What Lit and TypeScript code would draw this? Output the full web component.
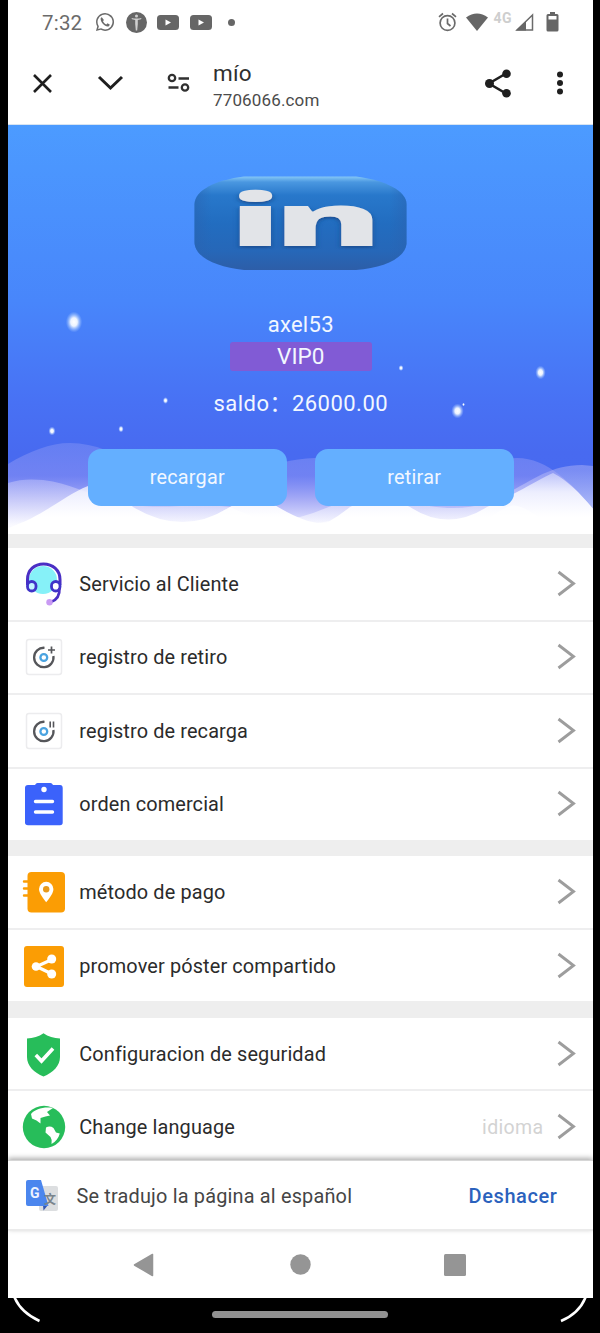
import { LitElement, html, css, svg } from "lit";
import { customElement, property } from "lit/decorators.js";

const icons: Record<string, unknown> = {
  headset: svg`<svg width="44" height="48" viewBox="0 0 44 48" fill="none">
    <circle cx="21" cy="20" r="14" fill="#86f1f8"/>
    <path d="M5.500 25V19.500C5.500 10 12.500 4 21.500 4S38 10 38 19.500V25" stroke="#4a2fc4" stroke-width="3"/>
    <rect x="5.500" y="21.500" width="8.500" height="9.500" rx="4.200" stroke="#4034c8" stroke-width="2.800" fill="#c5f4ff"/>
    <rect x="29.500" y="21.500" width="8.500" height="9.500" rx="4.200" stroke="#4034c8" stroke-width="2.800" fill="#fff"/>
    <path d="M37.500 28C38 36 34.500 40 29 42" stroke="#4a2fc4" stroke-width="2.600"/>
    <circle cx="27.500" cy="42.300" r="3.200" fill="#c99af3"/></svg>`,
  plus: svg`<svg width="44" height="48" viewBox="0 0 44 48" fill="none">
    <rect x="4.500" y="6.500" width="35" height="35" rx="2.500" stroke="#ececee" stroke-width="1.500"/>
    <path d="M22.500 14.800A9.700 9.700 0 1 0 31.400 23" stroke="#55565a" stroke-width="2.300"/>
    <circle cx="21.800" cy="24.500" r="3.400" stroke="#4aa3e0" stroke-width="2.300"/>
    <path d="M29.500 13.500V20.500M26 17H33" stroke="#55565a" stroke-width="1.700"/></svg>`,
  pause: svg`<svg width="44" height="48" viewBox="0 0 44 48" fill="none">
    <rect x="4.500" y="6.500" width="35" height="35" rx="2.500" stroke="#ececee" stroke-width="1.500"/>
    <path d="M22.500 14.800A9.700 9.700 0 1 0 31.400 23" stroke="#55565a" stroke-width="2.300"/>
    <circle cx="21.800" cy="24.500" r="3.400" stroke="#4aa3e0" stroke-width="2.300"/>
    <path d="M28.200 14.500V20.500M31.500 14.500V20.500" stroke="#55565a" stroke-width="1.600"/></svg>`,
  clipboard: svg`<svg width="44" height="48" viewBox="0 0 44 48">
    <path d="M6 5H13Q14 3 15.500 3H28.500Q30 3 31 5H38Q40.700 5 40.700 8V42.500Q40.700 45.300 38 45.300H6Q3 45.300 3 42.500V8Q3 5 6 5Z" fill="#3b62fb"/>
    <circle cx="22" cy="9.500" r="2.700" fill="#fff"/>
    <path d="M13.500 21.500H30.500M13.500 32H30.500" stroke="#fff" stroke-width="3.400" stroke-linecap="round"/></svg>`,
  book: svg`<svg width="44" height="48" viewBox="0 0 44 48">
    <rect x="5.500" y="4" width="37.500" height="40.500" rx="4" fill="#fb9d04"/>
    <path d="M2 13.500H7M2 20.500H7M2 27.500H7" stroke="#fb9d04" stroke-width="2.400" stroke-linecap="round"/>
    <path d="M24.200 34.200C20.500 29.500 17 25 17 21A7.200 7.200 0 0 1 31.400 21C31.400 25 28 29.500 24.200 34.200Z" fill="#fff"/>
    <circle cx="24.200" cy="21.200" r="3.200" fill="#e89a1c"/></svg>`,
  share: svg`<svg width="44" height="48" viewBox="0 0 44 48">
    <rect x="2" y="4" width="40" height="41" rx="3" fill="#fb9d04"/>
    <path d="M30 17.500L14.500 24.500L30 32" stroke="#fff" stroke-width="3.200" fill="none"/>
    <circle cx="14" cy="24.500" r="4.300" fill="#fff"/><circle cx="29.700" cy="17" r="4.500" fill="#fff"/><circle cx="29.700" cy="32" r="4.500" fill="#fff"/></svg>`,
  shield: svg`<svg width="44" height="48" viewBox="0 0 44 48">
    <path d="M21.500 3.200C26 6.500 32 8 38 8.500V27C38 36 31 42.500 21.500 46.500C12 42.500 5 36 5 27V8.500C11 8 17 6.500 21.500 3.200Z" fill="#27bd5a"/>
    <path d="M13.800 25L19.500 31L31 18.500" stroke="#fff" stroke-width="3.600" fill="none"/></svg>`,
  globe: svg`<svg width="44" height="48" viewBox="0 0 44 48">
    <circle cx="22" cy="24" r="21.200" fill="#27bd5a"/>
    <path d="M9 11C13 6 22 3.500 31 5L25 9L28 12.500L23.500 13.500L18.500 15L18.500 20.500L14.500 17.500L10 15.500Z" fill="#fff"/>
    <path d="M24 24.500Q28 22.500 31.500 25L34 29.500L37.800 30.500C36.500 35 34 38.500 29.500 41Q30.500 37 28.500 34L23.500 29.500Z" fill="#fff"/></svg>`,
};

@customElement("menu-row")
class MenuRow extends LitElement {
  @property() icon = "";
  @property() label = "";
  @property() hint = "";
  static styles = css`
    :host { display: flex; align-items: center; box-sizing: border-box; height: 73.500px; padding: 0 17px 0 14px; border-bottom: 2px solid #eeeeef; background: #fff; }
    :host([last]) { border-bottom: 0; height: 71.600px; }
    .icon { display: flex; width: 57.300px; }
    .label { flex: 1; padding-top: 1px; font-size: 19.900px; letter-spacing: 0.130px; color: #2b2b2b; white-space: nowrap; }
    .hint { padding-top: 1px; color: #d3d3d3; font-size: 19.500px; letter-spacing: 0.350px; margin-right: 12px; }
  `;
  render() {
    return html`<span class="icon">${icons[this.icon]}</span>
      <span class="label">${this.label}</span>
      <span class="hint">${this.hint}</span>
      <svg width="20" height="28" viewBox="0 0 20 28" fill="none"><path d="M2.500 2L17.500 13.500L2.500 25" stroke="#9d9d9d" stroke-width="2.900"/></svg>`;
  }
}

@customElement("status-bar")
class StatusBar extends LitElement {
  static styles = css`
    :host { display: flex; align-items: center; height: 44px; padding: 0 33.500px 0 34px; color: #6b6b6b; }
    .time { width: 53px; font-size: 20.500px; letter-spacing: 0.200px; white-space: nowrap; padding-top: 1px; }
    .left, .right { display: flex; align-items: center; }
    .left { gap: 10.500px; flex: 1; }
    .dot { width: 7px; height: 7px; border-radius: 50%; background: #666; margin-left: 6px; }
    .net { font: bold 14px Roboto, sans-serif; color: #cecece; margin: 0 3px 8px 6px; letter-spacing: 0.400px; }
    .wifi { margin-left: 9px; }
    .battery { margin-left: 12px; }
  `;
  render() {
    const tube = html`<svg width="22" height="17" viewBox="0 0 22 17"><rect y="1" width="22" height="15" rx="3.500" fill="#666"/><path d="M8.500 5.500L14 8.500L8.500 11.500Z" fill="#fff"/></svg>`;
    return html`<span class="time">7:32</span>
      <div class="left">
        <svg width="20" height="20" viewBox="1 1 22 22" fill="#6b6b6b"><path d="M19.050 4.910A9.820 9.820 0 0 0 12.040 2C6.580 2 2.130 6.450 2.130 11.910c0 1.750.46 3.450 1.320 4.950L2.050 22l5.250-1.380a9.900 9.900 0 0 0 4.740 1.210c5.460 0 9.910-4.450 9.910-9.910 0-2.650-1.030-5.140-2.900-7.010zM12.040 20.150a8.200 8.200 0 0 1-4.190-1.150l-.3-.18-3.120.82.830-3.040-.2-.31a8.200 8.200 0 1 1 6.980 3.860z"/><path d="M8.500 6.800c-.8.300-1.400 1.100-1.300 2.200.3 3.600 4.400 7.600 7.600 8 1.200.1 2.300-.7 2.400-2.200l-2.500-1.300-1.200 1.200c-1.500-.6-2.900-1.900-3.700-3.600l1-1.300z"/></svg>
        <svg width="21" height="21" viewBox="0 0 21 21"><circle cx="10.500" cy="10.500" r="10.500" fill="#666"/><path d="M5.500 6Q10.500 7.200 15.500 6L15 7.300L11.800 8V12L11.200 18.500H9.800L9.200 12V8L6 7.300Z" fill="#cfcfcf"/><circle cx="10.500" cy="4" r="1.500" fill="#cfcfcf"/></svg>
        ${tube}${tube}
        <span class="dot"></span>
      </div>
      <div class="right">
        <svg width="19" height="20" viewBox="0 0 19 20" fill="none" stroke="#6b6b6b" stroke-width="1.700"><circle cx="9.500" cy="11" r="7.400"/><path d="M9.500 6.500V11.500L12.500 14M1 4.800L5 1.500M18 4.800L14 1.500"/></svg>
        <svg class="wifi" width="22" height="18" viewBox="0 0 22 18"><path d="M0 4.500Q11-3.500 22 4.500L11 18Z" fill="#666"/></svg>
        <span class="net">4G</span>
        <svg width="19" height="18" viewBox="0 0 19 18"><path d="M2 17H17.500V2Z" fill="none" stroke="#6b6b6b" stroke-width="1.500"/><path d="M1 17.500H11V8Z" fill="#666"/></svg>
        <svg class="battery" width="13" height="20" viewBox="0 0 13 20"><path d="M4 0H9V2H11Q12.500 2 12.500 3.500V18Q12.500 19.500 11 19.500H2Q.5 19.500.5 18V3.500Q.5 2 2 2H4Z" fill="#666"/><rect x="2.500" y="4" width="8" height="3.500" fill="#fff"/></svg>
      </div>`;
  }
}

@customElement("browser-bar")
class BrowserBar extends LitElement {
  static styles = css`
    :host { display: flex; align-items: center; height: 81px; box-sizing: border-box; padding: 0 27px 2px 24px; border-bottom: 1px solid #d7e4f2; }
    .fold { margin-left: 44px; }
    .tune { margin-left: 43px; }
    .page { flex: 1; margin: 8px 0 0 23px; }
    .title { font-size: 22.500px; line-height: 27px; color: #303030; letter-spacing: 0.200px; }
    .host { font-size: 17px; line-height: 27px; color: #4b4b4b; letter-spacing: 0.150px; }
    .more { margin-left: 43px; }
  `;
  render() {
    return html`<svg width="21" height="21" viewBox="0 0 21 21"><path d="M2 2L19 19M19 2L2 19" stroke="#1f1f1f" stroke-width="2.600"/></svg>
      <svg class="fold" width="27" height="16" viewBox="0 0 27 16"><path d="M2 2L13.500 13L25 2" stroke="#1f1f1f" stroke-width="3" fill="none"/></svg>
      <svg class="tune" width="23" height="20" viewBox="0 0 23 20" fill="none" stroke="#303030" stroke-width="2.300"><circle cx="5" cy="5" r="3.200"/><path d="M11.500 5.500H22M1.500 14.500H11.500"/><circle cx="18" cy="14.500" r="3.200"/></svg>
      <div class="page"><div class="title">mío</div><div class="host">7706066.com</div></div>
      <svg width="28" height="29" viewBox="0 0 28 29" fill="#1f1f1f"><path d="M22 4.500L5 14.500L22 24.500" fill="none" stroke="#1f1f1f" stroke-width="2.600"/><circle cx="5.500" cy="14.500" r="4.500"/><circle cx="22.500" cy="4.700" r="4.300"/><circle cx="22.500" cy="24.300" r="4.300"/></svg>
      <svg class="more" width="11" height="26" viewBox="0 0 11 26" fill="#1f1f1f"><circle cx="5" cy="4.500" r="3"/><circle cx="5" cy="13" r="3"/><circle cx="5" cy="21.500" r="3"/></svg>`;
  }
}

@customElement("profile-hero")
class ProfileHero extends LitElement {
  static styles = css`
    :host { display: flex; flex-direction: column; align-items: center; position: relative; overflow: hidden; height: 409px; box-sizing: border-box; padding: 51px 0 0 1px; color: #f2f7ff; background: linear-gradient(#4c9bff 0, #4886fb 43%, #4871f4 68%, #486af0 80%, #4868ef); }
    .scene { position: absolute; top: 0; left: 0; }
    .logo, .name, .vip, .saldo, .actions { position: relative; }
    .logo { display: block; width: 213px; height: 95px; overflow: visible; }
    .name { margin-top: 40px; font-size: 22px; line-height: 28px; letter-spacing: 0.300px; }
    .vip { margin-top: 3px; width: 142px; height: 29px; border-radius: 3px; background: #815bd5; font-size: 22.500px; line-height: 29px; text-align: center; }
    .saldo { margin-top: 19px; font-size: 22px; line-height: 28px; letter-spacing: 0.480px; white-space: nowrap; }
    .actions { display: flex; gap: 28px; margin-top: 31px; }
    .btn { width: 199px; height: 57px; border-radius: 13px; background: #64afff; font-size: 19.800px; line-height: 57px; text-align: center; letter-spacing: 0.250px; }
  `;
  render() {
    const stars = [[66, 197, 5.5, 7], [532.5, 247.5, 3.5, 4.6], [449.5, 286, 4.2, 5], [393, 243, 1.7, 2], [157.5, 275.5, 1.8, 2.3], [44, 306, 2.4, 3], [113, 304, 1.8, 2.3], [455.5, 279.5, 1, 1.2]];
    return html`<svg class="scene" width="586" height="410" viewBox="0 0 586 410">
        <defs>
          <linearGradient id="back" gradientUnits="userSpaceOnUse" x1="0" y1="318" x2="0" y2="400"><stop offset="0" stop-color="#8f9cf6" stop-opacity=".4"/><stop offset=".4" stop-color="#8b92f5" stop-opacity=".6"/><stop offset=".7" stop-color="#b4b5f7" stop-opacity=".9"/><stop offset="1" stop-color="#ececff"/></linearGradient>
          <linearGradient id="mid" gradientUnits="userSpaceOnUse" x1="0" y1="345" x2="0" y2="400"><stop offset="0" stop-color="#b4b6f7" stop-opacity=".55"/><stop offset="1" stop-color="#fff" stop-opacity=".85"/></linearGradient>
          <linearGradient id="front" gradientUnits="userSpaceOnUse" x1="0" y1="342" x2="0" y2="392"><stop offset="0" stop-color="#d4d8fc" stop-opacity=".5"/><stop offset=".5" stop-color="#f2f3ff" stop-opacity=".9"/><stop offset="1" stop-color="#fff"/></linearGradient>
          <radialGradient id="star"><stop offset="0" stop-color="#fff"/><stop offset=".4" stop-color="#f4f9ff" stop-opacity=".95"/><stop offset="1" stop-color="#9fc6ff" stop-opacity="0"/></radialGradient>
        </defs>
        <path d="M0 339C22 326 42 318 62 318C112 318 150 362 190 362C226 362 258 334 307 333C355 333 370 370 410 370C458 370 465 333 509 333C540 333 565 360 586 385V410H0Z" fill="url(#back)"/>
        <path d="M0 358C12 354 23 354 35 355C62 358 82 370 105 376C150 388 180 376 222 382C245 392 262 397 292 392C312 387 330 376 350 374C372 370 385 372 402 376C425 384 455 386 479 378C515 364 535 340 574 340L586 341V410H0Z" fill="url(#mid)" opacity=".85"/>
        <path d="M0 403C38 390 55 371 80 361Q101 356 125 382Q175 412 222 382Q246 366 270 382Q304 402 320 397Q331 391 342 382Q372 365 402 382Q440 407 479 382C510 368 535 352 545 348C560 356 572 368 586 385V410H0Z" fill="url(#front)"/>
        <path d="M222 382Q255 398 285 399Q310 399 320 396L342 410H170ZM497 383C515 372 535 402 557 405Q573 405 586 397V410H450Z" fill="#fff" opacity=".6"/>
        ${stars.map(([x, y, rx, ry]) => svg`<ellipse cx=${x} cy=${y} rx=${rx * 1.5} ry=${ry * 1.5} fill="url(#star)"/>`)}
      </svg>
      <svg class="logo" viewBox="0 0 213 95">
        <defs>
          <linearGradient id="body" x1="0" y1="0" x2="0" y2="1"><stop offset="0" stop-color="#85c7f6"/><stop offset=".06" stop-color="#4a97e0"/><stop offset=".2" stop-color="#2878cb"/><stop offset=".5" stop-color="#226dc0"/><stop offset=".8" stop-color="#2667b8"/><stop offset="1" stop-color="#2d5ea8"/></linearGradient>
          <linearGradient id="edge"><stop offset="0" stop-color="#2b62b0" stop-opacity=".5"/><stop offset=".08" stop-color="#2b62b0" stop-opacity="0"/><stop offset=".92" stop-color="#2b62b0" stop-opacity="0"/><stop offset="1" stop-color="#2b62b0" stop-opacity=".5"/></linearGradient>
          <filter id="cast" x="-10%" y="-10%" width="120%" height="130%"><feDropShadow dx="0" dy="2" stdDeviation="1.300" flood-color="#174b8c" flood-opacity=".8"/></filter>
        </defs>
        <path d="M50 .5H162C191 4 212.500 15 212.500 28V68C211 82 190 92 162 94H50C22 91 .5 81 .5 66V28C1 14 22 4 50 .5Z" fill="url(#body)"/>
        <path d="M50 .5H162C191 4 212.500 15 212.500 28V68C211 82 190 92 162 94H50C22 91 .5 81 .5 66V28C1 14 22 4 50 .5Z" fill="url(#edge)"/>
        <text transform="translate(35 70) scale(2.260 1)" font-family="Open Sans" font-weight="800" font-size="72" letter-spacing="-3.600" fill="#e2e4e8" filter="url(#cast)">in</text>
      </svg>
      <div class="name">axel53</div>
      <div class="vip">VIP0</div>
      <div class="saldo">saldo：26000.00</div>
      <div class="actions"><div class="btn">recargar</div><div class="btn">retirar</div></div>`;
  }
}

@customElement("app-root")
class AppRoot extends LitElement {
  static styles = css`
    :host { display: block; box-sizing: border-box; height: 1333px; padding: 0 7.500px 0 8px; background: #000; font-family: Roboto, "Noto Sans CJK SC", sans-serif; overflow: hidden; }
    .screen { display: flex; flex-direction: column; height: 1298px; background: #fff; overflow: hidden; }
    .screen > * { flex-shrink: 0; }
    .menu { height: 626px; background: #eee; overflow: hidden; display: flex; flex-direction: column; box-sizing: border-box; padding-top: 14px; gap: 16.300px; }
    .group { flex-shrink: 0; }
    .toast { position: relative; display: flex; align-items: center; height: 71px; box-sizing: border-box; padding: 1px 35px 0 18px; border-top: 1px solid #d6d6d6; border-bottom: 2px solid #ebebeb; background: #fff; box-shadow: 0 -2px 5px rgba(0, 0, 0, .32); }
    .message { flex: 1; margin: 2px 0 0 17.500px; font-size: 19.900px; color: #454545; letter-spacing: 0.180px; white-space: nowrap; }
    .undo { font: 500 20px Roboto, sans-serif; color: #2b62bd; letter-spacing: 0.600px; }
    .nav { display: flex; align-items: center; justify-content: space-between; height: 67px; box-sizing: border-box; padding: 0 127px 0 125px; }
    .base { display: flex; justify-content: space-between; height: 35px; padding: 0 5px 0 4px; }
    .pill { width: 176px; height: 7px; margin-top: 13px; border-radius: 4px; background: #919191; }
  `;
  render() {
    return html`<div class="screen">
        <status-bar></status-bar>
        <browser-bar></browser-bar>
        <profile-hero></profile-hero>
        <div class="menu">
          <div class="group">
            <menu-row icon="headset" label="Servicio al Cliente"></menu-row>
            <menu-row icon="plus" label="registro de retiro"></menu-row>
            <menu-row icon="pause" label="registro de recarga"></menu-row>
            <menu-row icon="clipboard" label="orden comercial" last></menu-row>
          </div>
          <div class="group">
            <menu-row icon="book" label="método de pago"></menu-row>
            <menu-row icon="share" label="promover póster compartido" last></menu-row>
          </div>
          <div class="group">
            <menu-row icon="shield" label="Configuracion de seguridad"></menu-row>
            <menu-row icon="globe" label="Change language" hint="idioma" last></menu-row>
          </div>
        </div>
        <div class="toast">
          <svg width="33" height="33" viewBox="0 0 33 33">
            <rect x="13" y="7" width="19" height="25" rx="2" fill="#dcdee0"/>
            <path d="M17 26H22L17.500 31.500Z" fill="#3457b1"/>
            <path d="M2 1H15L22.500 27H2Q0 27 0 25V3Q0 1 2 1Z" fill="#4b86ee"/>
            <text x="4" y="18.500" font-family="Roboto" font-size="14" font-weight="700" fill="#eef3ff">G</text>
            <text x="18" y="24.500" font-family="Noto Sans CJK SC" font-size="12" font-weight="700" fill="#7a848c">文</text>
          </svg>
          <span class="message">Se tradujo la página al español</span>
          <span class="undo">Deshacer</span>
        </div>
        <div class="nav">
          <svg width="21" height="24" viewBox="0 0 21 24"><path d="M1.500 12L19.500 1.500V22.500Z" fill="#959595" stroke="#959595" stroke-width="1.500" stroke-linejoin="round"/></svg>
          <svg width="24" height="21" viewBox="0 0 24 21"><circle cx="13.500" cy="10.500" r="10.200" fill="#959595"/></svg>
          <svg width="22" height="22" viewBox="0 0 22 22"><rect width="22" height="22" rx="1.500" fill="#959595"/></svg>
        </div>
      </div>
      <div class="base">
        <svg width="30" height="26" viewBox="0 0 30 26" fill="none"><path d="M2 -2Q8 14 27.500 23" stroke="#fff" stroke-width="2.600"/></svg>
        <div class="pill"></div>
        <svg width="30" height="26" viewBox="0 0 30 26" fill="none"><path d="M28 -2Q22 15 3 23" stroke="#fff" stroke-width="2.600"/></svg>
      </div>`;
  }
}
